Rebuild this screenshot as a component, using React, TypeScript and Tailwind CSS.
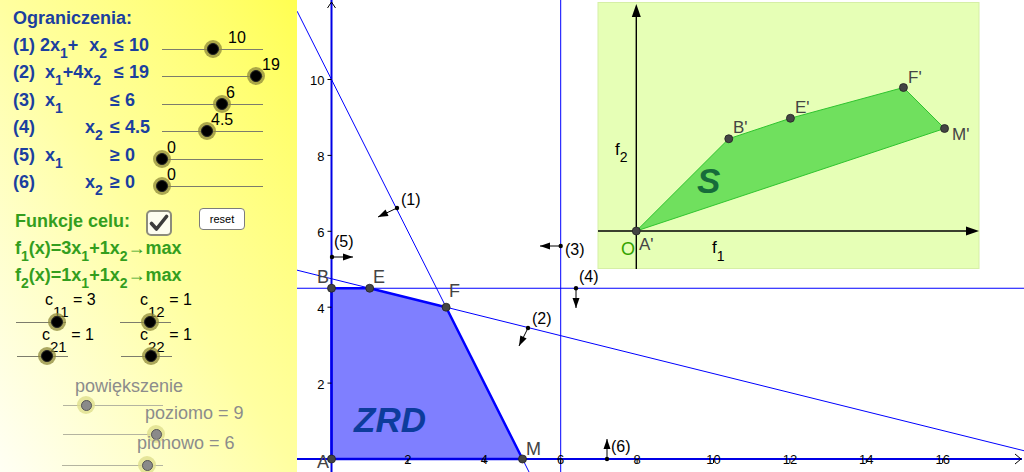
import React from 'react';

const X = (x: number) => 331.5 + 38.2 * x;
const Y = (y: number) => 459 - 37.95 * y;

function Sub({ children, className = '' }: { children: React.ReactNode; className?: string }) {
  return <span className={`relative top-[7px] ${className}`}>{children}</span>;
}

function Thumb({ gray }: { gray?: boolean }) {
  return gray ? (
    <div className="w-[18px] h-[18px] rounded-full bg-[#dede8c]/80 flex items-center justify-center">
      <div className="w-[11px] h-[11px] rounded-full bg-[#8a8a8a] border border-[#555]" />
    </div>
  ) : (
    <div className="w-[18px] h-[18px] rounded-full bg-[#8f8a3a]/75 flex items-center justify-center">
      <div className="w-[12px] h-[12px] rounded-full bg-black border border-[#222]" />
    </div>
  );
}

interface SliderProps {
  width: string;
  thumb: number;
  gray?: boolean;
  label?: React.ReactNode;
  labelX?: number;
  labelY?: number;
  labelClass?: string;
}

function Slider({ width, thumb, gray, label, labelX = 0, labelY = 0, labelClass = '' }: SliderProps) {
  return (
    <div className={`relative h-px shrink-0 ${width} ${gray ? 'bg-[#b4b4a0]' : 'bg-[#7c7c6c]'}`}>
      {label && (
        <div
          className={`absolute whitespace-nowrap leading-none ${labelClass}`}
          style={{ left: thumb + labelX, top: labelY }}
        >
          {label}
        </div>
      )}
      <div className="absolute" style={{ left: thumb - 9, top: -9 }}>
        <Thumb gray={gray} />
      </div>
    </div>
  );
}

const valueCls = 'text-[16px] text-black';

function ConstraintRow({
  num,
  lhs,
  lhsClass,
  rel,
  thumb,
  value,
  valueX,
}: {
  num: string;
  lhs: React.ReactNode;
  lhsClass: string;
  rel: string;
  thumb: number;
  value: string;
  valueX: number;
}) {
  return (
    <div className="h-[27.5px] flex items-center">
      <div className="w-[149px] shrink-0 flex whitespace-nowrap text-[18px] font-bold leading-none text-[#1b3f9f]">
        <span className="w-[27px] shrink-0">{num}</span>
        <span className={`shrink-0 flex ${lhsClass}`}>{lhs}</span>
        <span>{rel}</span>
      </div>
      <div className="mt-[9px]">
        <Slider width="w-[101px]" thumb={thumb} label={value} labelX={valueX} labelY={-19} labelClass={valueCls} />
      </div>
    </div>
  );
}

function CLabel({ i, j, v }: { i: number; j: number; v: number }) {
  return (
    <span>
      c<span className="relative top-[12px] text-[15px]">{`${i}${j}`}</span> = {v}
    </span>
  );
}

function LeftPanel() {
  const s = 'text-[14px]';
  return (
    <div className="w-[297px] h-full shrink-0 pl-[13px] flex flex-col bg-linear-to-tr from-[#fffff4] via-[#ffffa0] to-[#ffff50]">
      <div className="h-[31px] pt-[5px] flex items-center text-[18px] font-bold leading-none text-[#1b3f9f]">
        Ograniczenia:
      </div>
      <ConstraintRow
        num="(1)"
        lhsClass="w-[74px]"
        lhs={
          <>
            <span>
              2x<Sub className={s}>1</Sub>+
            </span>
            <span className="ml-[11px]">
              x<Sub className={s}>2</Sub>
            </span>
          </>
        }
        rel="≤ 10"
        thumb={51}
        value="10"
        valueX={15}
      />
      <ConstraintRow
        num="(2)"
        lhsClass="w-[74px] pl-[5px]"
        lhs={
          <span>
            x<Sub className={s}>1</Sub>+4x<Sub className={s}>2</Sub>
          </span>
        }
        rel="≤ 19"
        thumb={94}
        value="19"
        valueX={6}
      />
      <ConstraintRow
        num="(3)"
        lhsClass="w-[70px] pl-[5px]"
        lhs={
          <span>
            x<Sub className={s}>1</Sub>
          </span>
        }
        rel="≤ 6"
        thumb={60}
        value="6"
        valueX={4}
      />
      <ConstraintRow
        num="(4)"
        lhsClass="w-[70px] pl-[45px]"
        lhs={
          <span>
            x<Sub className={s}>2</Sub>
          </span>
        }
        rel="≤ 4.5"
        thumb={45}
        value="4.5"
        valueX={4}
      />
      <ConstraintRow
        num="(5)"
        lhsClass="w-[70px] pl-[5px]"
        lhs={
          <span>
            x<Sub className={s}>1</Sub>
          </span>
        }
        rel="≥ 0"
        thumb={0}
        value="0"
        valueX={5}
      />
      <ConstraintRow
        num="(6)"
        lhsClass="w-[70px] pl-[45px]"
        lhs={
          <span>
            x<Sub className={s}>2</Sub>
          </span>
        }
        rel="≥ 0"
        thumb={0}
        value="0"
        valueX={5}
      />

      <div className="mt-[11px] h-[27px] flex items-center">
        <span className="ml-[2px] text-[18px] font-bold leading-none text-[#339e1e]">Funkcje celu:</span>
        <div className="ml-[16px] mt-[4px] w-[26px] h-[26px] rounded-[5px] border-2 border-[#8c8c7c] bg-[#fdfdf0] flex items-center justify-center">
          <svg width="20" height="18" viewBox="0 0 20 18">
            <path d="M2.5 9.5 L7.5 15 L17.5 2.5" fill="none" stroke="#3c3c3c" strokeWidth="3.6" strokeLinecap="round" strokeLinejoin="round" />
          </svg>
        </div>
        <button className="ml-[27px] -mt-[3px] w-[46px] h-[22px] rounded-[4px] border-[1.5px] border-[#7c7c7c] bg-white text-[11px] leading-none text-black">
          reset
        </button>
      </div>
      <div className="h-[27.5px] flex items-center ml-[2px] text-[18px] font-bold leading-none text-[#339e1e] whitespace-nowrap">
        <span>
          f<Sub className="text-[14px]">1</Sub>(x)=3x<Sub className="text-[14px]">1</Sub>+1x<Sub className="text-[14px]">2</Sub>→max
        </span>
      </div>
      <div className="h-[27.5px] flex items-center ml-[2px] text-[18px] font-bold leading-none text-[#339e1e] whitespace-nowrap">
        <span>
          f<Sub className="text-[14px]">2</Sub>(x)=1x<Sub className="text-[14px]">1</Sub>+1x<Sub className="text-[14px]">2</Sub>→max
        </span>
      </div>

      <div className="h-[34px] flex items-end">
        <div className="ml-[3px]">
          <Slider width="w-[50px]" thumb={41} label={<CLabel i={1} j={1} v={3} />} labelX={-12} labelY={-30} labelClass={valueCls} />
        </div>
        <div className="ml-[54px]">
          <Slider width="w-[51px]" thumb={30} label={<CLabel i={1} j={2} v={1} />} labelX={-10} labelY={-30} labelClass={valueCls} />
        </div>
      </div>
      <div className="h-[34px] flex items-end">
        <div className="ml-[4px]">
          <Slider width="w-[51px]" thumb={30} label={<CLabel i={2} j={1} v={1} />} labelX={-5} labelY={-29} labelClass={valueCls} />
        </div>
        <div className="ml-[53px]">
          <Slider width="w-[51px]" thumb={30} label={<CLabel i={2} j={2} v={1} />} labelX={-11} labelY={-29} labelClass={valueCls} />
        </div>
      </div>

      <div className="mt-[20px] ml-[62px] text-[18px] leading-none text-[#8c8c8c]">powiększenie</div>
      <div className="h-[11px] flex items-end ml-[50px]">
        <Slider width="w-[100px]" thumb={23} gray />
      </div>
      <div className="h-[29px] flex items-end ml-[50px]">
        <Slider width="w-[100px]" thumb={93} gray label="poziomo = 9" labelX={-11} labelY={-30} labelClass="text-[18px] text-[#8c8c8c]" />
      </div>
      <div className="h-[31px] flex items-end ml-[49px]">
        <Slider width="w-[101px]" thumb={85} gray label="pionowo = 6" labelX={-10} labelY={-31} labelClass="text-[18px] text-[#8c8c8c]" />
      </div>
    </div>
  );
}

function head(x1: number, y1: number, x2: number, y2: number, len = 10, w = 3.5) {
  const dx = x2 - x1;
  const dy = y2 - y1;
  const L = Math.hypot(dx, dy);
  const ux = dx / L;
  const uy = dy / L;
  const bx = x2 - ux * len;
  const by = y2 - uy * len;
  const px = -uy;
  const py = ux;
  return `${x2},${y2} ${bx + px * w},${by + py * w} ${bx - px * w},${by - py * w}`;
}

function Direction({ x1, y1, x2, y2 }: { x1: number; y1: number; x2: number; y2: number }) {
  return (
    <g>
      <line x1={x1} y1={y1} x2={x2} y2={y2} stroke="#000" strokeWidth="1" />
      <polygon points={head(x1, y1, x2, y2)} fill="#000" />
      <circle cx={x1} cy={y1} r="2.2" fill="#000" />
    </g>
  );
}

function Pt({ x, y }: { x: number; y: number }) {
  return <circle cx={x} cy={y} r="4" fill="#444" stroke="#222" strokeWidth="0.8" />;
}

function Graph() {
  const A = [X(0), Y(0)];
  const B = [X(0), Y(4.5)];
  const E = [X(1), Y(4.5)];
  const F = [X(3), Y(4)];
  const M = [X(5), Y(0)];
  const poly = [A, B, E, F, M].map((p) => p.join(',')).join(' ');

  const fx = (v: number) => 636.3 + 20.55 * v;
  const fy = (v: number) => 231 - 20.5 * v;
  const A2 = [fx(0), fy(0)];
  const B2 = [fx(4.5), fy(4.5)];
  const E2 = [fx(7.5), fy(5.5)];
  const F2 = [fx(13), fy(7)];
  const M2 = [fx(15), fy(5)];
  const poly2 = [A2, B2, E2, F2, M2].map((p) => p.join(',')).join(' ');

  const font = "'Liberation Sans', Arial, sans-serif";

  return (
    <svg width="727" height="472" viewBox="297 0 727 472" className="block shrink-0" fontFamily={font}>
      <rect x="297" y="0" width="727" height="472" fill="#fff" />

      {/* constraint lines */}
      <line x1={X(-0.9)} y1={Y(11.8)} x2={X(5.3)} y2={Y(-0.6)} stroke="#0000ff" strokeWidth="1" />
      <line x1={X(-1)} y1={Y(5)} x2={X(19)} y2={Y(0)} stroke="#0000ff" strokeWidth="1" />
      <line x1={X(6)} y1="0" x2={X(6)} y2="472" stroke="#0000ff" strokeWidth="1" />
      <line x1="297" y1={Y(4.5)} x2="1024" y2={Y(4.5)} stroke="#0000ff" strokeWidth="1.2" />

      {/* feasible region */}
      <polygon points={poly} fill="#7f7fff" stroke="#0000ff" strokeWidth="2.5" strokeLinejoin="round" />

      {/* axes */}
      <line x1={X(0)} y1="0" x2={X(0)} y2="472" stroke="#0000e6" strokeWidth="2" />
      <line x1="297" y1={Y(0)} x2="1022" y2={Y(0)} stroke="#0000e6" strokeWidth="2" />
      <polyline points={`${X(0) - 4},8 ${X(0)},2 ${X(0) + 4},8`} fill="none" stroke="#000" strokeWidth="1" />
      <polyline points={`1015,${Y(0) - 5} 1021,${Y(0)} 1015,${Y(0) + 5}`} fill="none" stroke="#000" strokeWidth="1" />
      {[2, 4, 6, 8, 10].map((v) => (
        <g key={`y${v}`}>
          <line x1={X(0) - 4} y1={Y(v)} x2={X(0)} y2={Y(v)} stroke="#000" strokeWidth="1" />
          <text x={X(0) - 7} y={Y(v) + 5.5} fontSize="13" textAnchor="end" fill="#000">
            {v}
          </text>
        </g>
      ))}
      {[2, 4, 6, 8, 10, 12, 14, 16].map((v) => (
        <g key={`x${v}`}>
          <line x1={X(v)} y1={Y(0)} x2={X(v)} y2={Y(0) + 4} stroke="#000" strokeWidth="1" />
          <text x={X(v)} y={Y(0) + 5} fontSize="13" textAnchor="middle" fill="#000">
            {v}
          </text>
        </g>
      ))}

      {/* direction arrows */}
      <Direction x1={397} y1={208} x2={378} y2={217} />
      <Direction x1={528} y1={328} x2={519} y2={346} />
      <Direction x1={560.7} y1={246} x2={540} y2={246} />
      <Direction x1={576} y1={288.2} x2={576} y2={308} />
      <Direction x1={332} y1={257} x2={353} y2={257} />
      <Direction x1={607} y1={459} x2={607} y2={439} />
      <g fontSize="16" fill="#000">
        <text x="401" y="205">(1)</text>
        <text x="532" y="324">(2)</text>
        <text x="565" y="255">(3)</text>
        <text x="579" y="282">(4)</text>
        <text x="334" y="247">(5)</text>
        <text x="611" y="452">(6)</text>
      </g>

      {/* points */}
      {[A, B, E, F, M].map((p, i) => (
        <Pt key={i} x={p[0]} y={p[1]} />
      ))}
      <g fontSize="18" fill="#444">
        <text x="317" y="468">A</text>
        <text x="317" y="283">B</text>
        <text x="373" y="283">E</text>
        <text x="449" y="297">F</text>
        <text x="526" y="455">M</text>
      </g>
      <text x="354" y="432" fontSize="35" fontWeight="bold" fontStyle="italic" fill="#0d3c9c">
        ZRD
      </text>

      {/* criterion space inset */}
      <rect x="598" y="2.5" width="381" height="266" fill="#e6ffb6" stroke="#d6efa6" strokeWidth="1" />
      <line x1="598" y1="231" x2="968" y2="231" stroke="#000" strokeWidth="1.4" />
      <polygon points="979,231 966,226.5 966,235.5" fill="#000" />
      <line x1="636.3" y1="269" x2="636.3" y2="14" stroke="#000" strokeWidth="1.4" />
      <polygon points="636.3,4 631.8,17 640.8,17" fill="#000" />
      <polygon points={poly2} fill="#70e05e" stroke="#2fc42f" strokeWidth="1" />
      {[A2, B2, E2, F2, M2].map((p, i) => (
        <Pt key={`f${i}`} x={p[0]} y={p[1]} />
      ))}
      <g fontSize="17" fill="#444">
        <text x="639" y="250">A'</text>
        <text x="733" y="133">B'</text>
        <text x="795" y="113">E'</text>
        <text x="908" y="83">F'</text>
        <text x="952" y="140">M'</text>
      </g>
      <text x="621" y="255" fontSize="18" fill="#33a300">
        O
      </text>
      <text x="615" y="155" fontSize="17" fill="#000">
        f<tspan fontSize="14" dy="7">2</tspan>
      </text>
      <text x="712" y="253" fontSize="17" fill="#000">
        f<tspan fontSize="14" dy="8">1</tspan>
      </text>
      <text x="697" y="193" fontSize="35" fontWeight="bold" fontStyle="italic" fill="#166c3a">
        S
      </text>
    </svg>
  );
}

export default function App() {
  return (
    <div className="flex w-[1024px] h-[472px] overflow-hidden bg-white font-['Liberation_Sans',Arial,sans-serif]">
      <LeftPanel />
      <Graph />
    </div>
  );
}
